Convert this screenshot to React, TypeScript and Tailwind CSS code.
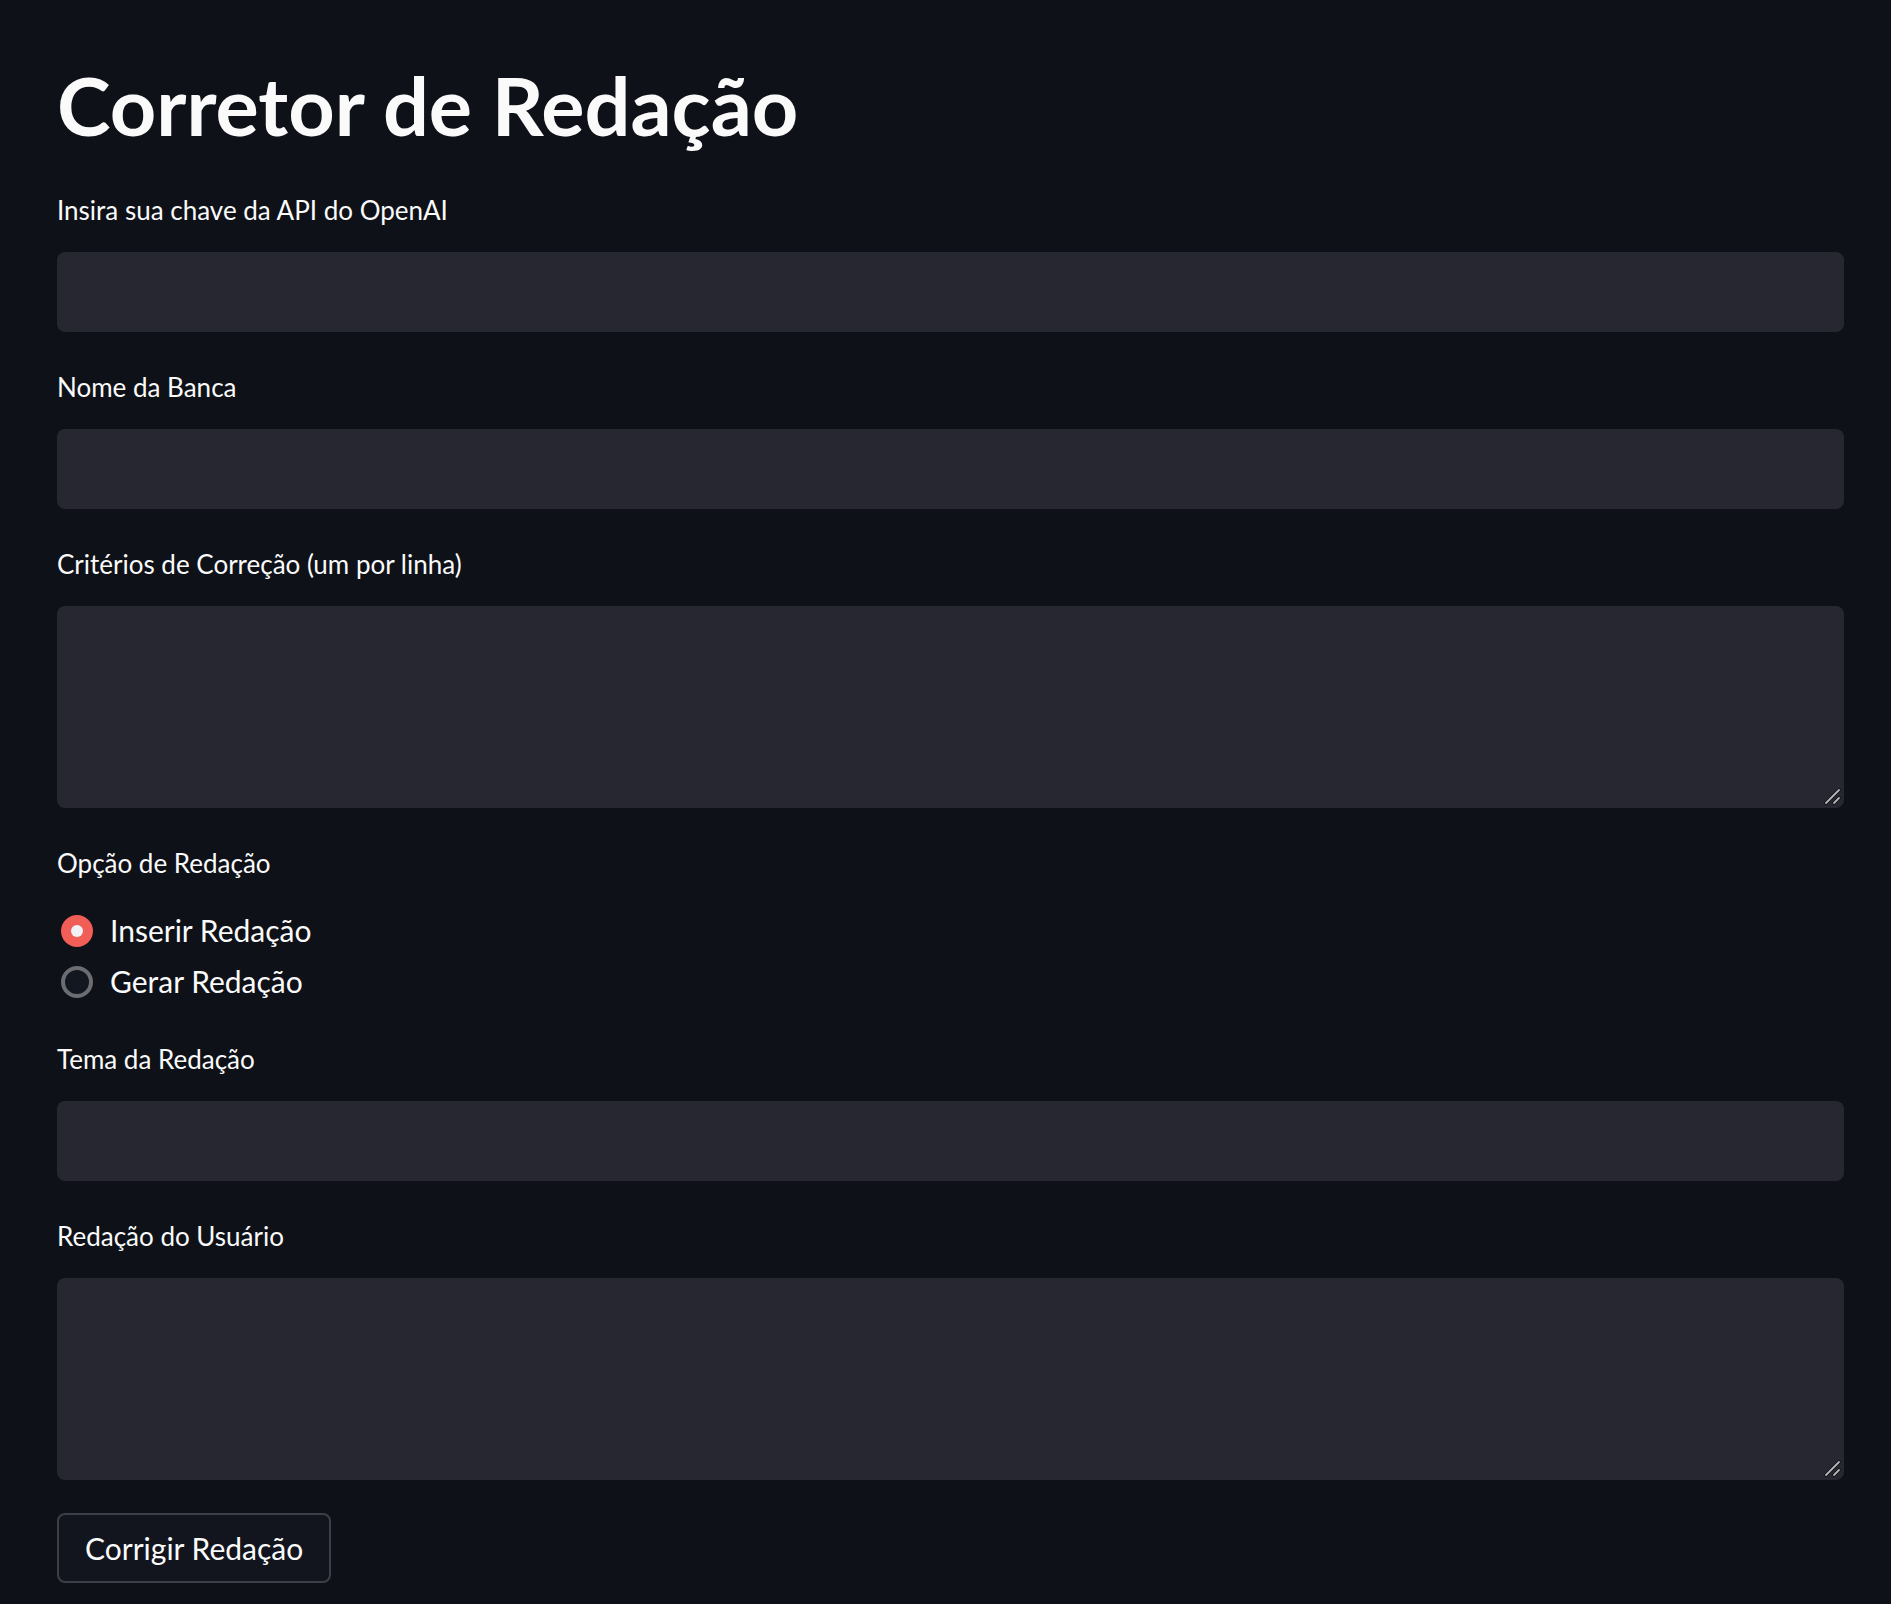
import { useState } from "react";

const font = "font-['Lato','Noto_Sans',sans-serif]";

const Label = ({ children }: { children: string }) => (
  <label className="block h-[40px] text-[26px] leading-[40px] text-[#fafafa]">
    {children}
  </label>
);

const TextInput = ({ label }: { label: string }) => (
  <div className="flex flex-col">
    <Label>{label}</Label>
    <input
      type="text"
      className="mt-[22px] h-[80px] w-full rounded-lg bg-[#262730] px-5 text-[28px] text-[#fafafa] outline-none"
    />
  </div>
);

// resize grip drawn over the corner, like the browser's own handle
const Grip = () => (
  <svg
    className="pointer-events-none absolute right-[3px] bottom-[3px]"
    width="18"
    height="18"
    viewBox="0 0 18 18"
  >
    <path d="M3 16 L16 3" stroke="#0e1117" strokeWidth="3.5" strokeLinecap="round" />
    <path d="M3 16 L16 3" stroke="#b4b4b8" strokeWidth="1.8" strokeLinecap="round" />
    <path d="M11 16 L16 11" stroke="#0e1117" strokeWidth="3.5" strokeLinecap="round" />
    <path d="M11 16 L16 11" stroke="#b4b4b8" strokeWidth="1.8" strokeLinecap="round" />
  </svg>
);

const TextArea = ({ label }: { label: string }) => (
  <div className="flex flex-col">
    <Label>{label}</Label>
    <div className="relative mt-[22px]">
      <textarea className="block h-[202px] w-full resize-none rounded-lg bg-[#262730] px-5 py-4 text-[28px] text-[#fafafa] outline-none" />
      <Grip />
    </div>
  </div>
);

const Radio = ({
  label,
  checked,
  onSelect,
}: {
  label: string;
  checked: boolean;
  onSelect: () => void;
}) => (
  <button
    type="button"
    onClick={onSelect}
    className="flex h-[51px] items-center gap-[17px] pl-1 text-left"
  >
    {checked ? (
      <span className="flex h-8 w-8 items-center justify-center rounded-full bg-[#f15d57]">
        <span className="h-3 w-3 rounded-full bg-[#f0f2f6]" />
      </span>
    ) : (
      <span className="h-8 w-8 rounded-full border-4 border-[#6c6d72] bg-[#131720]" />
    )}
    <span className="text-[30px] text-[#fafafa]">{label}</span>
  </button>
);

export default function App() {
  const [option, setOption] = useState("inserir");

  return (
    <div className={`min-h-[1604px] bg-[#0e1117] ${font}`}>
      <div className="flex flex-col pr-[47px] pl-[57px] pt-[57px]">
        <h1 className="text-[81px] leading-[96px] font-bold text-[#fafafa]">
          Corretor de Redação
        </h1>

        <div className="mt-[37px] flex flex-col gap-[35px]">
          <TextInput label="Insira sua chave da API do OpenAI" />
          <TextInput label="Nome da Banca" />
          <TextArea label="Critérios de Correção (um por linha)" />

          <div className="-mb-[3px] flex flex-col">
            <Label>Opção de Redação</Label>
            <div className="mt-[22px] flex flex-col">
              <Radio
                label="Inserir Redação"
                checked={option === "inserir"}
                onSelect={() => setOption("inserir")}
              />
              <Radio
                label="Gerar Redação"
                checked={option === "gerar"}
                onSelect={() => setOption("gerar")}
              />
            </div>
          </div>

          <TextInput label="Tema da Redação" />
          <TextArea label="Redação do Usuário" />
        </div>

        <div className="mt-[33px]">
          <button
            type="button"
            className="h-[70px] rounded-lg border-2 border-[#3d3f47] bg-[#12151d] px-[26px] text-[30px] text-[#fafafa]"
          >
            Corrigir Redação
          </button>
        </div>
      </div>
    </div>
  );
}
